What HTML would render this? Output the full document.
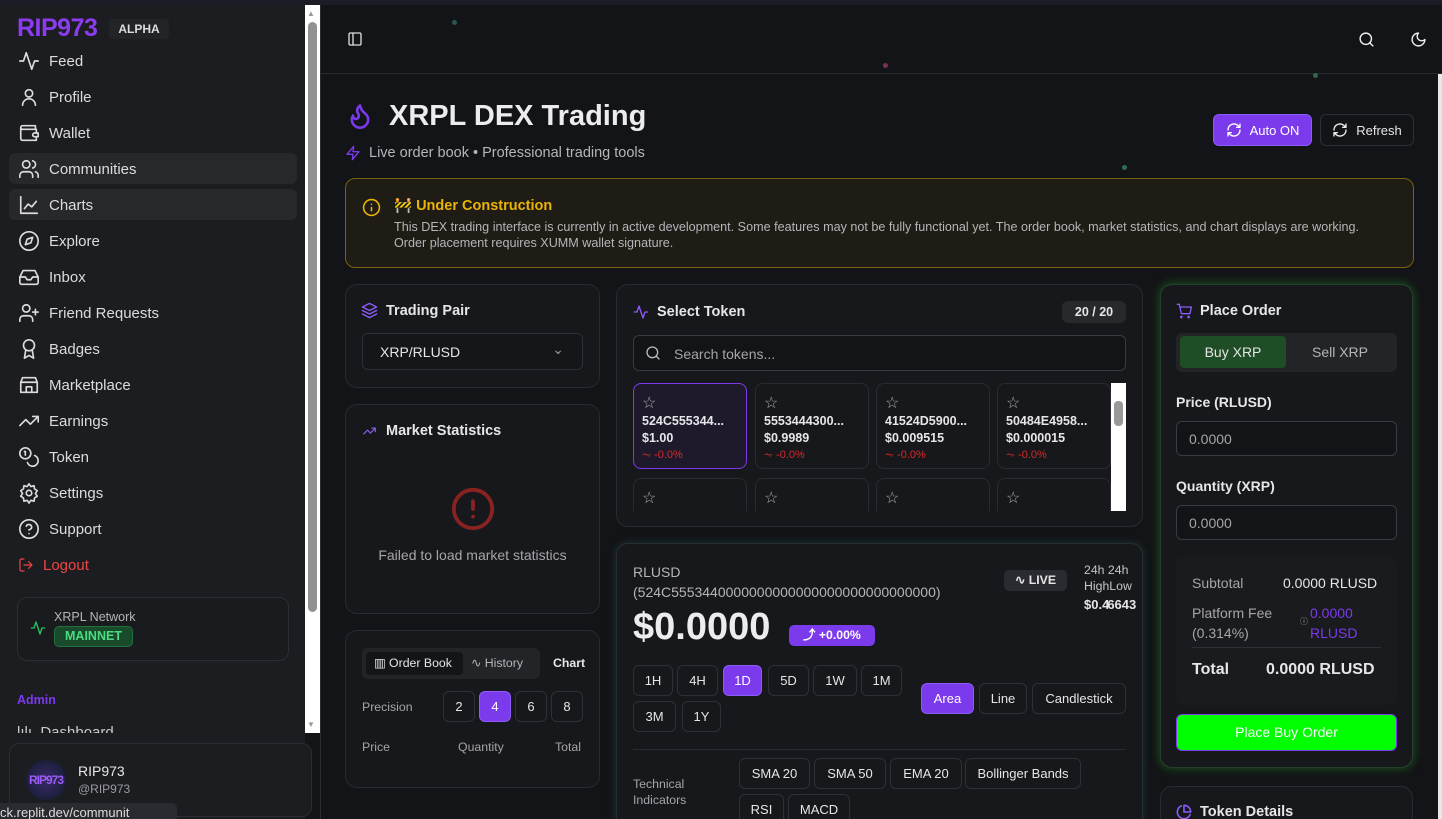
<!DOCTYPE html>
<html style="overflow:hidden;width:1442px;height:819px"><head><meta charset="utf-8"><style>
*{box-sizing:border-box;margin:0;padding:0}
body{width:1442px;height:819px;overflow:hidden;background:#131417;font-family:"Liberation Sans",sans-serif;color:#e6e6e8;position:relative}
.a{position:absolute}
.card{position:absolute;background:#17181b;border:1px solid #2a2b30;border-radius:12px}
.nav{position:absolute;left:18px;display:flex;align-items:center;gap:9px;font-size:15px;color:#dcdcdf}
.nav svg{width:22px;height:22px;fill:none;stroke:#dcdcdf;stroke-width:1.8;stroke-linecap:round;stroke-linejoin:round}
svg.i{fill:none;stroke-linecap:round;stroke-linejoin:round}
.btn{position:absolute;border:1px solid #2f3035;border-radius:6px;font-size:13px;display:flex;align-items:center;justify-content:center;color:#e6e6e8}
.pur{background:#7c3aed;border-color:#8b5cf6;color:#fff}
.tk{position:absolute;width:114px;height:86px;border:1px solid #2a2b30;border-radius:8px;padding:12px 8px;font-size:16px;color:#aaa;line-height:16px}
.tk b{display:block;font-size:12.5px;margin-top:1px;color:#e6e6e8;line-height:16px}
.tk .r{color:#dc2626;font-size:11px;margin-top:2px;line-height:14px}
.dot{position:absolute;border-radius:50%;width:5px;height:5px}
</style></head><body>
<div class="a" style="left:0;top:0;width:1442px;height:5px;background:#1b1c26"></div>
<div class="a" style="left:0;top:5px;width:305px;height:814px;background:#1c1d20"></div>
<div class="a" style="left:305px;top:5px;width:15px;height:728px;background:#fff"></div>
<div class="a" style="left:308px;top:22px;width:9px;height:590px;background:#919191;border-radius:5px"></div>
<div class="a" style="left:307px;top:9px;font-size:8px;color:#999">▲</div>
<div class="a" style="left:307px;top:720px;font-size:8px;color:#999">▼</div>
<div class="a" style="left:320px;top:5px;width:1px;height:814px;background:#2a2b2f"></div>
<div class="a" style="left:17px;top:14px;font-size:25px;font-weight:bold;color:#8b3cf0;letter-spacing:-0.5px">RIP973</div>
<div class="a" style="left:109px;top:19px;width:60px;height:20px;background:#232428;border-radius:4px;font-size:12px;font-weight:bold;text-align:center;line-height:20px;color:#ddd">ALPHA</div>
<div class="a" style="left:9px;top:153px;width:288px;height:31px;background:#27282c;border-radius:6px"></div>
<div class="a" style="left:9px;top:189px;width:288px;height:31px;background:#27282c;border-radius:6px"></div>
<div class="nav" style="top:50px"><svg viewBox="0 0 24 24"><path d="M22 12h-4l-3 9L9 3l-3 9H2"/></svg>Feed</div>
<div class="nav" style="top:86px"><svg viewBox="0 0 24 24"><circle cx="12" cy="8" r="4"/><path d="M5 21a7 7 0 0 1 14 0"/></svg>Profile</div>
<div class="nav" style="top:122px"><svg viewBox="0 0 24 24"><path d="M19 7V4H5a2 2 0 0 0 0 4h15v4M3 6v12a2 2 0 0 0 2 2h15v-4"/><path d="M18 12a2 2 0 0 0 0 4h4v-4z"/></svg>Wallet</div>
<div class="nav" style="top:158px"><svg viewBox="0 0 24 24"><circle cx="9" cy="7" r="4"/><path d="M2 21v-2a4 4 0 0 1 4-4h6a4 4 0 0 1 4 4v2M16 3.1a4 4 0 0 1 0 7.8M22 21v-2a4 4 0 0 0-3-3.9"/></svg>Communities</div>
<div class="nav" style="top:194px"><svg viewBox="0 0 24 24"><path d="M3 3v18h18M7 16l4-5 4 3 5-6"/></svg>Charts</div>
<div class="nav" style="top:230px"><svg viewBox="0 0 24 24"><circle cx="12" cy="12" r="10"/><path d="M16 8l-2 6-6 2 2-6z"/></svg>Explore</div>
<div class="nav" style="top:266px"><svg viewBox="0 0 24 24"><path d="M22 12h-6l-2 3h-4l-2-3H2M5.5 5h13L22 12v6a2 2 0 0 1-2 2H4a2 2 0 0 1-2-2v-6z"/></svg>Inbox</div>
<div class="nav" style="top:302px"><svg viewBox="0 0 24 24"><circle cx="9" cy="7" r="4"/><path d="M2 21v-2a4 4 0 0 1 4-4h6a4 4 0 0 1 4 4v2M19 8v6M22 11h-6"/></svg>Friend Requests</div>
<div class="nav" style="top:338px"><svg viewBox="0 0 24 24"><circle cx="12" cy="8" r="6"/><path d="M8.5 13L7 22l5-3 5 3-1.5-9"/></svg>Badges</div>
<div class="nav" style="top:374px"><svg viewBox="0 0 24 24"><path d="M3 9l2-5h14l2 5M3 9v11h18V9M3 9h18M9 20v-6h6v6"/></svg>Marketplace</div>
<div class="nav" style="top:410px"><svg viewBox="0 0 24 24"><path d="M22 7l-8.5 8.5-5-5L2 17M16 7h6v6"/></svg>Earnings</div>
<div class="nav" style="top:446px"><svg viewBox="0 0 24 24"><circle cx="8" cy="8" r="6"/><path d="M18.1 10.4A6 6 0 1 1 10.3 18M7 6h1v4"/></svg>Token</div>
<div class="nav" style="top:482px"><svg viewBox="0 0 24 24"><circle cx="12" cy="12" r="3"/><path d="M12 2l2 3 3.5-1 .5 3.5 3 2-2 3 2 3-3 2-.5 3.5-3.5-1-2 3-2-3-3.5 1L6 17.5l-3-2 2-3-2-3 3-2L6.5 4 10 5z"/></svg>Settings</div>
<div class="nav" style="top:518px"><svg viewBox="0 0 24 24"><circle cx="12" cy="12" r="10"/><path d="M9.1 9a3 3 0 0 1 5.8 1c0 2-3 3-3 3M12 17h.01"/></svg>Support</div>
<div class="nav" style="top:554px;color:#ef4444"><svg viewBox="0 0 24 24" style="stroke:#ef4444;width:16px"><path d="M9 21H5a2 2 0 0 1-2-2V5a2 2 0 0 1 2-2h4M16 17l5-5-5-5M21 12H9"/></svg>Logout</div>
<div class="a" style="left:17px;top:597px;width:272px;height:64px;border:1px solid #2d2e33;border-radius:10px;background:#1a1b1e"></div>
<svg class="a i" style="left:30px;top:620px" width="16" height="16" viewBox="0 0 24 24" stroke="#22c55e" stroke-width="2"><path d="M22 12h-4l-3 9L9 3l-3 9H2"/></svg>
<div class="a" style="left:54px;top:610px;font-size:12.5px;color:#b5b5ba">XRPL Network</div>
<div class="a" style="left:54px;top:626px;width:79px;height:21px;background:#1a4a2c;border:1px solid #22703e;border-radius:5px;font-size:12.5px;font-weight:bold;color:#4ade80;text-align:center;line-height:19px">MAINNET</div>
<div class="a" style="left:17px;top:693px;font-size:12.5px;color:#7c3aed;font-weight:bold">Admin</div>
<div class="a" style="left:17px;top:723px;font-size:15px;color:#ccc;height:10px;overflow:hidden;line-height:20px">lılı&nbsp; Dashboard</div>
<div class="a" style="left:9px;top:743px;width:303px;height:74px;border:1px solid #2d2e33;border-radius:10px;background:#1c1d20"></div>
<div class="a" style="left:26px;top:760px;width:40px;height:40px;border-radius:50%;background:radial-gradient(#3a2a6a,#0f1a28);font-size:12px;color:#9b5cf6;font-weight:bold;line-height:40px;text-align:center;letter-spacing:-1px">RIP973</div>
<div class="a" style="left:78px;top:763px;font-size:14px;color:#e6e6e8">RIP973</div>
<div class="a" style="left:78px;top:782px;font-size:12px;color:#9a9aa0">@RIP973</div>
<div class="a" style="left:0;top:803px;width:177px;height:16px;background:#2a2b30;border-radius:0 5px 0 0;font-size:13px;color:#ddd;white-space:nowrap;overflow:hidden;line-height:20px">ck.replit.dev/communit</div>
<div class="a" style="left:321px;top:73px;width:1121px;height:1px;background:#2a2b2f"></div>
<svg class="a i" style="left:347px;top:31px" width="16" height="16" viewBox="0 0 24 24" stroke="#ddd" stroke-width="2"><rect x="3" y="3" width="18" height="18" rx="2"/><path d="M9 3v18"/></svg>
<svg class="a i" style="left:1358px;top:31px" width="17" height="17" viewBox="0 0 24 24" stroke="#eee" stroke-width="2"><circle cx="11" cy="11" r="8"/><path d="M21 21l-4.3-4.3"/></svg>
<svg class="a i" style="left:1410px;top:31px" width="17" height="17" viewBox="0 0 24 24" stroke="#eee" stroke-width="2"><path d="M12 3a6 6 0 0 0 9 9 9 9 0 1 1-9-9z"/></svg>
<div class="a" style="left:1438px;top:74px;width:4px;height:745px;background:#e8e8e8"></div>
<div class="dot" style="left:883px;top:63px;background:#7a3050"></div>
<div class="dot" style="left:452px;top:20px;background:#2a5550"></div>
<div class="dot" style="left:1313px;top:73px;background:#2f6a48"></div>
<div class="dot" style="left:1122px;top:165px;background:#2f6a58"></div>
<div class="dot" style="left:688px;top:566px;background:#2f5a58"></div>
<svg class="a i" style="left:346px;top:101px" width="28" height="30" viewBox="0 0 24 24" stroke="#7c3aed" stroke-width="2.2"><path d="M8.5 14.5A2.5 2.5 0 0 0 11 12c0-1.4-.5-2-1-3-1.1-2.1-.2-4.1 2-6 .5 2.5 2 4.9 4 6.5 2 1.6 3 3.5 3 5.5a7 7 0 1 1-14 0c0-1.2.4-2.3 1-3.3a2.5 2.5 0 0 0 2.5 2.8z"/></svg>
<div class="a" style="left:389px;top:100px;font-size:29px;font-weight:bold;color:#ececee">XRPL DEX Trading</div>
<svg class="a i" style="left:345px;top:145px" width="16" height="16" viewBox="0 0 24 24" stroke="#7c3aed" stroke-width="2"><path d="M13 2L3 14h9l-1 8 10-12h-9z"/></svg>
<div class="a" style="left:369px;top:145px;font-size:14.5px;color:#b5b5ba">Live order book • Professional trading tools</div>
<div class="btn pur" style="left:1213px;top:114px;width:99px;height:32px;gap:8px"><svg class="i" width="16" height="16" viewBox="0 0 24 24" stroke="#fff" stroke-width="2"><path d="M21 12a9 9 0 0 1-15 6.7L3 16M3 12a9 9 0 0 1 15-6.7L21 8M21 3v5h-5M3 21v-5h5"/></svg>Auto ON</div>
<div class="btn" style="left:1320px;top:114px;width:94px;height:32px;gap:8px;background:#131417"><svg class="i" width="16" height="16" viewBox="0 0 24 24" stroke="#eee" stroke-width="2"><path d="M21 12a9 9 0 0 1-15 6.7L3 16M3 12a9 9 0 0 1 15-6.7L21 8M21 3v5h-5M3 21v-5h5"/></svg>Refresh</div>
<div class="a" style="left:345px;top:178px;width:1069px;height:90px;background:#1f1c15;border:1px solid #7a6210;border-radius:10px"></div>
<svg class="a i" style="left:362px;top:198px" width="19" height="19" viewBox="0 0 24 24" stroke="#eab308" stroke-width="2"><circle cx="12" cy="12" r="10"/><path d="M12 16v-4M12 8h.01"/></svg>
<div class="a" style="left:394px;top:197px;font-size:14.5px;font-weight:bold;color:#eab308">🚧 Under Construction</div>
<div class="a" style="left:394px;top:219px;font-size:12.6px;color:#b5b5ba;line-height:16px;width:995px">This DEX trading interface is currently in active development. Some features may not be fully functional yet. The order book, market statistics, and chart displays are working. Order placement requires XUMM wallet signature.</div>
<div class="card" style="left:345px;top:284px;width:255px;height:104px"></div>
<svg class="a i" style="left:361px;top:302px" width="17" height="17" viewBox="0 0 24 24" stroke="#8b5cf6" stroke-width="2"><path d="M12 2L2 7l10 5 10-5zM2 12l10 5 10-5M2 17l10 5 10-5"/></svg>
<div class="a" style="left:386px;top:303px;font-size:14.5px;font-weight:bold">Trading Pair</div>
<div class="a" style="left:362px;top:333px;width:221px;height:37px;border:1px solid #2f3035;border-radius:6px;background:#151619;padding:10px 17px;font-size:14px">XRP/RLUSD<span style="position:absolute;right:18px;top:7px;color:#999">⌄</span></div>
<div class="card" style="left:345px;top:404px;width:255px;height:210px"></div>
<svg class="a i" style="left:361px;top:424px" width="17" height="14" viewBox="0 0 24 24" stroke="#8b5cf6" stroke-width="2"><path d="M22 7l-8.5 8.5-5-5L2 17M16 7h6v6"/></svg>
<div class="a" style="left:386px;top:423px;font-size:14.5px;font-weight:bold">Market Statistics</div>
<svg class="a i" style="left:450px;top:486px" width="46" height="46" viewBox="0 0 24 24" stroke="#8b2222" stroke-width="2"><circle cx="12" cy="12" r="10"/><path d="M12 8v4M12 16h.01"/></svg>
<div class="a" style="left:345px;top:547px;width:255px;text-align:center;font-size:14px;color:#a5a5aa">Failed to load market statistics</div>
<div class="card" style="left:345px;top:630px;width:255px;height:158px"></div>
<div class="a" style="left:362px;top:648px;width:178px;height:31px;background:#232428;border-radius:6px"></div>
<div class="a" style="left:366px;top:652px;width:97px;height:23px;background:#141518;border-radius:4px;font-size:12.3px;line-height:23px;padding-left:8px">▥ Order Book</div>
<div class="a" style="left:471px;top:656px;font-size:12.3px;color:#b5b5ba">∿ History</div>
<div class="a" style="left:553px;top:656px;font-size:12.3px;font-weight:bold">Chart</div>
<div class="a" style="left:362px;top:700px;font-size:12.3px;color:#a5a5aa">Precision</div>
<div class="btn" style="left:443px;top:691px;width:32px;height:31px">2</div>
<div class="btn pur" style="left:479px;top:691px;width:32px;height:31px">4</div>
<div class="btn" style="left:515px;top:691px;width:32px;height:31px">6</div>
<div class="btn" style="left:551px;top:691px;width:32px;height:31px">8</div>
<div class="a" style="left:362px;top:740px;font-size:12.3px;color:#a5a5aa">Price</div>
<div class="a" style="left:458px;top:740px;font-size:12.3px;color:#a5a5aa">Quantity</div>
<div class="a" style="left:555px;top:740px;font-size:12.3px;color:#a5a5aa">Total</div>
<div class="card" style="left:616px;top:284px;width:527px;height:243px"></div>
<svg class="a i" style="left:633px;top:304px" width="16" height="16" viewBox="0 0 24 24" stroke="#8b5cf6" stroke-width="2"><path d="M22 12h-4l-3 9L9 3l-3 9H2"/></svg>
<div class="a" style="left:657px;top:304px;font-size:14.5px;font-weight:bold">Select Token</div>
<div class="a" style="left:1062px;top:301px;width:64px;height:22px;background:#28292d;border-radius:6px;font-size:12.5px;text-align:center;line-height:22px;font-weight:bold">20 / 20</div>
<div class="a" style="left:633px;top:335px;width:493px;height:36px;border:1px solid #3a3b40;border-radius:6px;background:#131417"></div>
<svg class="a i" style="left:645px;top:345px" width="16" height="16" viewBox="0 0 24 24" stroke="#bbb" stroke-width="2"><circle cx="11" cy="11" r="8"/><path d="M21 21l-4.3-4.3"/></svg>
<div class="a" style="left:674px;top:346px;font-size:14px;color:#a5a5aa">Search tokens...</div>
<div class="a" style="left:633px;top:383px;width:478px;height:128px;overflow:hidden">
<div class="tk" style="left:0;top:0;border-color:#7c3aed;background:#1e1a2c">☆<b>524C555344...</b><b>$1.00</b><div class="r">⏦ -0.0%</div></div>
<div class="tk" style="left:122px;top:0">☆<b>5553444300...</b><b>$0.9989</b><div class="r">⏦ -0.0%</div></div>
<div class="tk" style="left:243px;top:0">☆<b>41524D5900...</b><b>$0.009515</b><div class="r">⏦ -0.0%</div></div>
<div class="tk" style="left:364px;top:0">☆<b>50484E4958...</b><b>$0.000015</b><div class="r">⏦ -0.0%</div></div>
<div class="tk" style="left:0;top:95px">☆</div><div class="tk" style="left:122px;top:95px">☆</div><div class="tk" style="left:243px;top:95px">☆</div><div class="tk" style="left:364px;top:95px">☆</div>
</div>
<div class="a" style="left:1111px;top:383px;width:15px;height:128px;background:#fff"></div>
<div class="a" style="left:1114px;top:401px;width:9px;height:25px;background:#999;border-radius:4px"></div>
<div class="card" style="left:616px;top:543px;width:527px;height:290px;box-shadow:0 0 8px rgba(40,120,110,.35)"></div>
<div class="a" style="left:633px;top:562px;font-size:14px;color:#b5b5ba;line-height:20px">RLUSD<br>(524C5553440000000000000000000000000000)</div>
<div class="a" style="left:1004px;top:570px;width:63px;height:21px;background:#2a2b30;border-radius:5px;font-size:12.3px;font-weight:bold;text-align:center;line-height:21px">∿ LIVE</div>
<div class="a" style="left:1084px;top:562px;font-size:12.3px;color:#c5c5ca;line-height:16px">24h 24h<br>HighLow</div>
<div class="a" style="left:1084px;top:597px;font-size:13px;font-weight:bold;white-space:nowrap">$0.4<span style="margin-left:-2px">6643</span></div>
<div class="a" style="left:633px;top:606px;font-size:38px;font-weight:bold;color:#ececee">$0.0000</div>
<div class="a" style="left:789px;top:625px;width:86px;height:21px;background:#7c3aed;border-radius:5px;font-size:12.3px;font-weight:bold;text-align:center;line-height:21px;color:#fff">⤴ +0.00%</div>
<div class="btn" style="left:633px;top:665px;width:40px;height:31px">1H</div>
<div class="btn" style="left:677px;top:665px;width:41px;height:31px">4H</div>
<div class="btn pur" style="left:723px;top:665px;width:39px;height:31px">1D</div>
<div class="btn" style="left:768px;top:665px;width:41px;height:31px">5D</div>
<div class="btn" style="left:813px;top:665px;width:44px;height:31px">1W</div>
<div class="btn" style="left:861px;top:665px;width:41px;height:31px">1M</div>
<div class="btn" style="left:633px;top:701px;width:43px;height:31px">3M</div>
<div class="btn" style="left:682px;top:701px;width:39px;height:31px">1Y</div>
<div class="btn pur" style="left:921px;top:683px;width:53px;height:31px">Area</div>
<div class="btn" style="left:979px;top:683px;width:48px;height:31px">Line</div>
<div class="btn" style="left:1032px;top:683px;width:94px;height:31px">Candlestick</div>
<div class="a" style="left:633px;top:749px;width:493px;height:1px;background:#2a2b30"></div>
<div class="a" style="left:633px;top:776px;font-size:12.3px;color:#a5a5aa;line-height:16px">Technical<br>Indicators</div>
<div class="btn" style="left:739px;top:758px;width:71px;height:31px">SMA 20</div>
<div class="btn" style="left:814px;top:758px;width:72px;height:31px">SMA 50</div>
<div class="btn" style="left:890px;top:758px;width:72px;height:31px">EMA 20</div>
<div class="btn" style="left:965px;top:758px;width:116px;height:31px">Bollinger Bands</div>
<div class="btn" style="left:739px;top:794px;width:45px;height:31px">RSI</div>
<div class="btn" style="left:788px;top:794px;width:62px;height:31px">MACD</div>
<div class="card" style="left:1160px;top:284px;width:253px;height:484px;box-shadow:0 0 10px rgba(40,180,40,.45);border-color:#24402a"></div>
<svg class="a i" style="left:1176px;top:303px" width="16" height="16" viewBox="0 0 24 24" stroke="#8b5cf6" stroke-width="2"><circle cx="8" cy="21" r="1"/><circle cx="19" cy="21" r="1"/><path d="M2 2h3l2.7 12.4a2 2 0 0 0 2 1.6h9.7a2 2 0 0 0 2-1.6L23 6H6"/></svg>
<div class="a" style="left:1200px;top:303px;font-size:14.5px;font-weight:bold">Place Order</div>
<div class="a" style="left:1176px;top:333px;width:221px;height:39px;background:#232428;border-radius:6px"></div>
<div class="a" style="left:1180px;top:336px;width:106px;height:32px;background:#1f4d25;border-radius:4px;font-size:14px;text-align:center;line-height:32px">Buy XRP</div>
<div class="a" style="left:1290px;top:336px;width:100px;height:32px;font-size:14px;text-align:center;line-height:32px;color:#b5b5ba">Sell XRP</div>
<div class="a" style="left:1176px;top:394px;font-size:14px;font-weight:bold">Price (RLUSD)</div>
<div class="a" style="left:1176px;top:421px;width:221px;height:35px;border:1px solid #3a3b40;border-radius:6px;background:#131417;padding:9px 12px;font-size:14px;color:#a5a5aa">0.0000</div>
<div class="a" style="left:1176px;top:478px;font-size:14px;font-weight:bold">Quantity (XRP)</div>
<div class="a" style="left:1176px;top:505px;width:221px;height:35px;border:1px solid #3a3b40;border-radius:6px;background:#131417;padding:9px 12px;font-size:14px;color:#a5a5aa">0.0000</div>
<div class="a" style="left:1176px;top:557px;width:221px;height:148px;background:#1a1b1e;border-radius:8px"></div>
<div class="a" style="left:1192px;top:575px;font-size:14px;color:#a5a5aa">Subtotal</div>
<div class="a" style="left:1283px;top:575px;font-size:14px">0.0000 RLUSD</div>
<div class="a" style="left:1192px;top:603px;font-size:14px;color:#a5a5aa;line-height:20px">Platform Fee<br>(0.314%)</div>
<div class="a" style="left:1300px;top:616px;font-size:8px;color:#aaa">ⓘ</div>
<div class="a" style="left:1310px;top:603px;font-size:14px;color:#7c3aed;line-height:20px">0.0000<br>RLUSD</div>
<div class="a" style="left:1192px;top:647px;width:189px;height:1px;background:#2f3035"></div>
<div class="a" style="left:1192px;top:661px;font-size:16px;font-weight:bold">Total</div>
<div class="a" style="left:1266px;top:661px;font-size:16px;font-weight:bold">0.0000 RLUSD</div>
<div class="a" style="left:1176px;top:714px;width:221px;height:37px;background:#00ff00;border:1px solid #7c3aed;border-radius:6px;font-size:14px;text-align:center;line-height:35px;color:#fff">Place Buy Order</div>
<div class="card" style="left:1160px;top:786px;width:253px;height:60px"></div>
<svg class="a i" style="left:1176px;top:804px" width="16" height="16" viewBox="0 0 24 24" stroke="#8b5cf6" stroke-width="2.4"><path d="M21.2 15.9A10 10 0 1 1 8 2.8M22 12A10 10 0 0 0 12 2v10z"/></svg>
<div class="a" style="left:1200px;top:804px;font-size:14.5px;font-weight:bold">Token Details</div>
</body></html>
